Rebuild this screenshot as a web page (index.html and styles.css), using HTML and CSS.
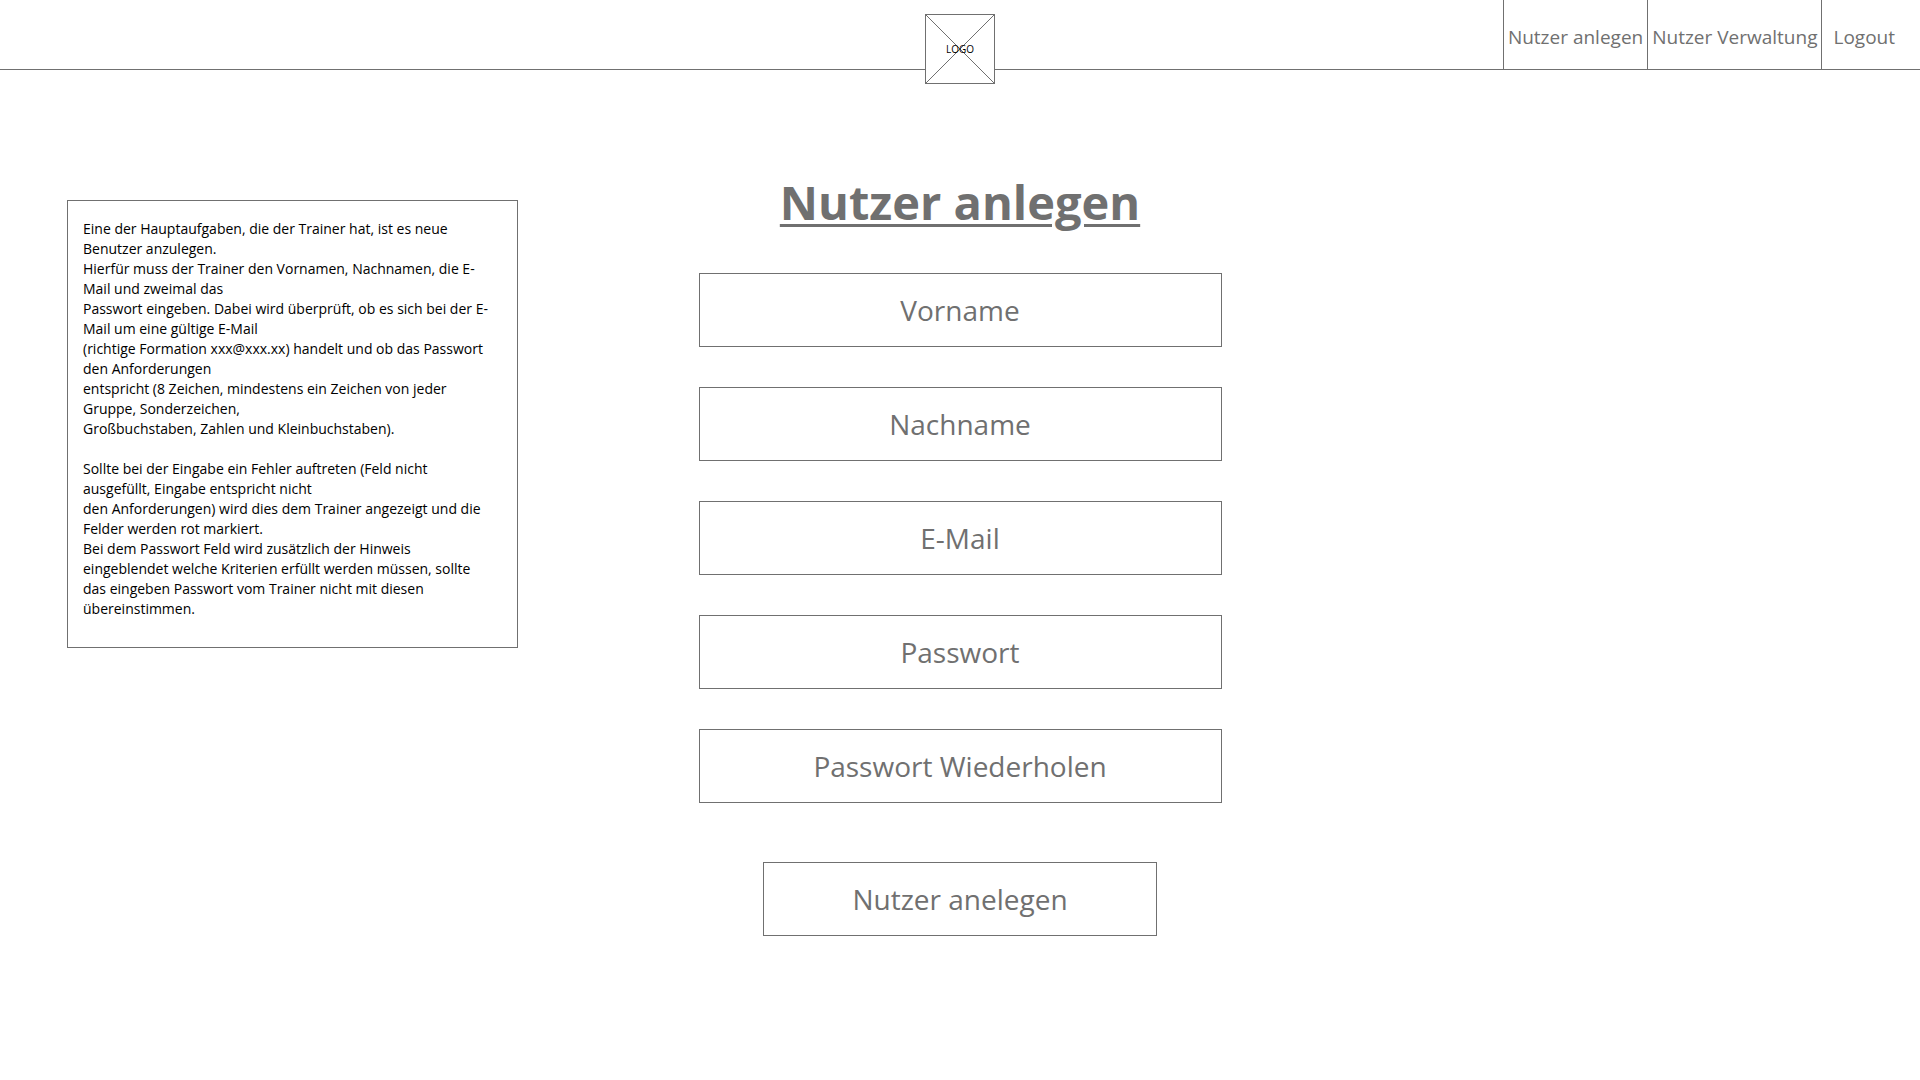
FILE: index.html
```html
<!DOCTYPE html>
<html lang="de">
<head>
  <meta charset="utf-8">
  <meta name="viewport" content="width=device-width, initial-scale=1">
  <title>Nutzer anlegen</title>
  <link rel="stylesheet" href="styles.css">
</head>
<body>
  <header class="header">
    <a class="logo" href="#">
      <svg class="logo-cross" viewBox="0 0 70 70" aria-hidden="true">
        <rect x="0.5" y="0.5" width="69" height="69"/>
        <path d="M0.5 0.5L69.5 69.5M69.5 0.5L0.5 69.5"/>
      </svg>
      <span class="logo-text">LOGO</span>
    </a>
    <nav class="nav">
      <a class="nav-link" href="#">Nutzer anlegen</a>
      <a class="nav-link" href="#">Nutzer Verwaltung</a>
      <a class="nav-link nav-link-logout" href="#">Logout</a>
    </nav>
  </header>

  <main class="main">
    <aside class="note">
      <p class="note-text">Eine der Hauptaufgaben, die der Trainer hat, ist es neue<br>
        Benutzer anzulegen.<br>
        Hierfür muss der Trainer den Vornamen, Nachnamen, die E-<br>
        Mail und zweimal das<br>
        Passwort eingeben. Dabei wird überprüft, ob es sich bei der E-<br>
        Mail um eine gültige E-Mail<br>
        (richtige Formation xxx@xxx.xx) handelt und ob das Passwort<br>
        den Anforderungen<br>
        entspricht (8 Zeichen, mindestens ein Zeichen von jeder<br>
        Gruppe, Sonderzeichen,<br>
        Großbuchstaben, Zahlen und Kleinbuchstaben).</p>
      <p class="note-text">Sollte bei der Eingabe ein Fehler auftreten (Feld nicht<br>
        ausgefüllt, Eingabe entspricht nicht<br>
        den Anforderungen) wird dies dem Trainer angezeigt und die<br>
        Felder werden rot markiert.<br>
        Bei dem Passwort Feld wird zusätzlich der Hinweis<br>
        eingeblendet welche Kriterien erfüllt werden müssen, sollte<br>
        das eingeben Passwort vom Trainer nicht mit diesen<br>
        übereinstimmen.</p>
    </aside>

    <form class="form">
      <h1 class="title">Nutzer anlegen</h1>
      <div class="fields">
        <input class="field" type="text" placeholder="Vorname" aria-label="Vorname">
        <input class="field" type="text" placeholder="Nachname" aria-label="Nachname">
        <input class="field" type="email" placeholder="E-Mail" aria-label="E-Mail">
        <input class="field" type="password" placeholder="Passwort" aria-label="Passwort">
        <input class="field" type="password" placeholder="Passwort Wiederholen" aria-label="Passwort Wiederholen">
      </div>
      <button class="submit" type="submit">Nutzer anelegen</button>
    </form>
  </main>
</body>
</html>
```
FILE: styles.css
```css
* {
  box-sizing: border-box;
}

body {
  margin: 0;
  background: #fff;
  color: #707070;
  font-family: "Segoe UI", "Open Sans", "Noto Sans", sans-serif;
}

.header {
  display: grid;
  grid-template-columns: 1fr auto 1fr;
  align-items: start;
  height: 70px;
  border-bottom: 1px solid #707070;
}

.logo {
  grid-column: 2;
  display: grid;
  place-items: center;
  width: 70px;
  height: 70px;
  margin-top: 14px;
  background: #fff;
  color: #000;
  text-decoration: none;
}

.logo-cross,
.logo-text {
  grid-area: 1 / 1;
}

.logo-cross {
  width: 70px;
  height: 70px;
  fill: none;
  stroke: #707070;
  stroke-width: 1;
}

.logo-text {
  font-size: 10px;
  line-height: 14px;
}

.nav {
  display: flex;
  justify-content: flex-end;
  padding-right: 14px;
}

.nav-link {
  height: 69px;
  padding: 3px 4px 0;
  border-left: 1px solid #707070;
  color: inherit;
  font-size: 19px;
  line-height: 69px;
  text-decoration: none;
  white-space: nowrap;
}

.nav-link-logout {
  padding-right: 11px;
  padding-left: 11px;
}

.main {
  display: grid;
  grid-template-columns: minmax(520px, 1fr) minmax(0, 523px) 1fr;
  align-items: start;
  padding-top: 100px;
  padding-bottom: 100px;
}

.note {
  width: 451px;
  margin: 30px 0 0 67px;
  padding: 18px 15px 28px;
  border: 1px solid #707070;
  color: #000;
  font-size: 14px;
  line-height: 20px;
}

.note-text {
  margin: 0;
}

.note-text + .note-text {
  margin-top: 20px;
}

.form {
  display: flex;
  flex-direction: column;
  align-items: center;
}

.title {
  margin: 0 0 39px;
  font-size: 47px;
  line-height: 64px;
  font-weight: 700;
  text-decoration: underline;
  text-decoration-thickness: 3px;
  text-underline-offset: 4px;
}

.fields {
  display: flex;
  flex-direction: column;
  gap: 40px;
  width: 100%;
}

.field,
.submit {
  height: 74px;
  padding: 0 16px;
  border: 1px solid #707070;
  border-radius: 0;
  background: #fff;
  color: #707070;
  font-family: inherit;
  font-size: 28px;
  text-align: center;
}

.field::placeholder {
  color: #707070;
  opacity: 1;
}

.submit {
  width: 394px;
  margin-top: 59px;
}
```
